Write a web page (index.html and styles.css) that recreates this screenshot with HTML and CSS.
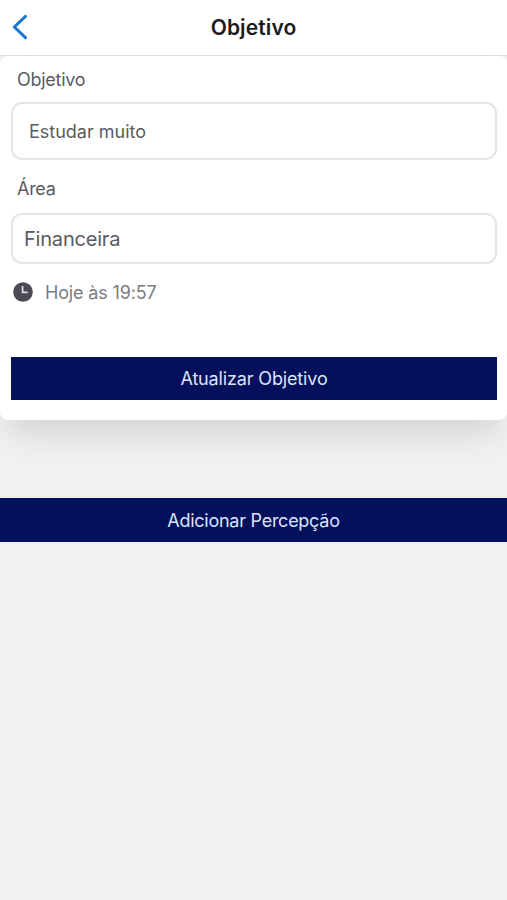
FILE: index.html
```html
<!DOCTYPE html>
<html lang="pt-BR">
<head>
<meta charset="utf-8">
<meta name="viewport" content="width=device-width, initial-scale=1">
<title>Objetivo</title>
<link rel="stylesheet" href="styles.css">
</head>
<body>
<header class="navbar">
  <a class="back" aria-label="Voltar">
    <svg width="16" height="26" viewBox="0 0 16 26" fill="none" stroke="#1877d4" stroke-width="3" stroke-linecap="round" stroke-linejoin="round"><path d="M13.5 2.3 2.3 13 13.5 23.7"/></svg>
  </a>
  <h1 class="title">Objetivo</h1>
</header>
<main>
  <section class="card">
    <div class="label">Objetivo</div>
    <div class="field field-goal">Estudar muito</div>
    <div class="label label-area">Área</div>
    <div class="field field-area">Financeira</div>
    <div class="time">
      <svg width="20" height="20" viewBox="0 0 20 20"><circle cx="10" cy="10" r="9.8" fill="#4b4b53"/><path d="M9.6 4v6.4h5.2" fill="none" stroke="#d8d8de" stroke-width="1.8"/></svg>
      <span>Hoje às 19:57</span>
    </div>
    <button class="button button-update">Atualizar Objetivo</button>
  </section>
  <button class="button button-add">Adicionar Percepção</button>
</main>
</body>
</html>
```
FILE: styles.css
```css
* { box-sizing: border-box; }
body {
  margin: 0;
  min-height: 900px;
  background: #f1f1f1;
  font-family: Inter, "Liberation Sans", sans-serif;
  font-size: 18px;
  color: #5b5b5e;
}
.navbar {
  display: grid;
  grid-template-columns: 40px 1fr 40px;
  align-items: center;
  height: 56px;
  background: #fff;
  border-bottom: 1px solid #dedede;
}
.back { display: flex; padding: 0 0 1px 12px; }
.title {
  margin: 0;
  text-align: center;
  font-size: 21px;
  line-height: 26px;
  letter-spacing: 0.12px;
  font-weight: 600;
  color: #1b1b1d;
}
.card {
  height: 364px;
  padding: 11px 10px 0 11px;
  background: #fff;
  border-radius: 8px;
  box-shadow: 0 20px 32px -9px rgba(0, 0, 0, 0.14);
}
.label {
  height: 35px;
  padding-left: 6px;
  line-height: 26px;
  letter-spacing: -0.28px;
}
.label-area { margin-top: 16px; height: 37px; }
.field {
  display: flex;
  align-items: center;
  border: 2px solid #e5e5e5;
  border-radius: 11px;
}
.field-goal { height: 58px; padding-left: 16px; }
.field-area {
  height: 51px;
  padding-left: 11px;
  font-size: 20px;
  letter-spacing: -0.2px;
}
.time {
  display: flex;
  align-items: center;
  gap: 12px;
  height: 26px;
  margin-top: 15px;
  padding-left: 2px;
  letter-spacing: -0.15px;
  color: #7c7c7f;
}
.button {
  display: flex;
  align-items: center;
  justify-content: center;
  width: 100%;
  height: 43px;
  padding: 0;
  border: 0;
  background: #03105b;
  color: #dde3fa;
  font: inherit;
}
.button-update { margin-top: 52px; letter-spacing: -0.15px; }
.button-add {
  height: 44px;
  margin-top: 78px;
  letter-spacing: -0.26px;
}
```
